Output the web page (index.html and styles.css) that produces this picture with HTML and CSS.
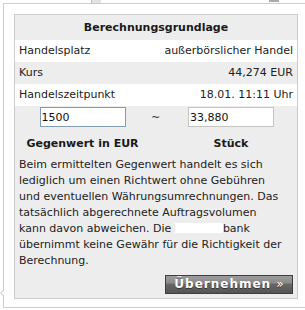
FILE: index.html
```html
<!DOCTYPE html>
<html lang="de">
<head>
    <meta charset="UTF-8">
    <meta name="viewport" content="width=device-width, initial-scale=1.0">
    <title>Berechnungsgrundlage</title>
    <link rel="stylesheet" href="styles.css">
</head>
<body>
    <div class="behind">
        <div class="market-select">
            <span class="market-text">Frankfurt - Zertifikate</span>
            <span class="market-btn"></span>
        </div>
    </div>

    <div class="popup">
        <div class="calc">
            <div class="calc-head">Berechnungsgrundlage</div>
            <div class="calc-row">
                <span>Handelsplatz</span>
                <span>außerbörslicher Handel</span>
            </div>
            <div class="calc-row alt">
                <span>Kurs</span>
                <span>44,274 EUR</span>
            </div>
            <div class="calc-row">
                <span>Handelszeitpunkt</span>
                <span>18.01. 11:11 Uhr</span>
            </div>

            <div class="calc-body">
                <div class="calc-grid">
                    <input class="calc-input focused" type="text" value="1500">
                    <span class="calc-tilde">~</span>
                    <input class="calc-input" type="text" value="33,880">
                    <span class="calc-label">Gegenwert in EUR</span>
                    <span></span>
                    <span class="calc-label">Stück</span>
                </div>

                <p class="calc-note">
                    Beim ermittelten Gegenwert handelt es sich<br>
                    lediglich um einen Richtwert ohne Gebühren<br>
                    und eventuellen Währungsumrechnungen. Das<br>
                    tatsächlich abgerechnete Auftragsvolumen<br>
                    kann davon abweichen. Die <span class="redacted"></span>bank<br>
                    übernimmt keine Gewähr für die Richtigkeit der<br>
                    Berechnung.
                </p>

                <div class="calc-actions">
                    <button class="btn-apply" type="button">Übernehmen <span class="btn-arrow">»</span></button>
                </div>
            </div>
        </div>
    </div>
</body>
</html>
```

FILE: styles.css
```css
* {
    box-sizing: border-box;
    margin: 0;
    padding: 0;
}

body {
    font-family: Verdana, "DejaVu Sans", sans-serif;
    font-size: 11px;
    color: #222;
    background-color: #fff;
    width: 305px;
    height: 310px;
    overflow: hidden;
    position: relative;
}

/* page content peeking out above the popup */
.behind {
    height: 3px;
    overflow: hidden;
}

.market-select {
    display: flex;
    align-items: flex-end;
    width: 198px;
    height: 18px;
    margin: -15px 0 0 91px;
    border-left: 1px solid #bbb;
    background: linear-gradient(to right, #e2e2e2 9px, #fff 9px);
}

.market-text {
    margin-left: 11px;
    line-height: 14px;
    margin-bottom: 1px;
    color: #222;
    flex: 1;
}

.market-btn {
    width: 10px;
    height: 16px;
    margin-right: 10px;
    margin-bottom: 1px;
    background-color: #aaa;
}

/* popup */
.popup {
    position: absolute;
    left: 3px;
    top: 3px;
    width: 310px;
    height: 305px;
    padding: 10px 10px 8px 10px;
    border: 1px solid #ccc;
    background-color: #fff;
}

.popup::before,
.popup::after {
    content: '';
    position: absolute;
    width: 0;
    height: 0;
    border-style: solid;
    border-color: transparent;
}

.popup::before {
    left: -4px;
    top: 285px;
    border-width: 4px 4px 4px 0;
    border-right-color: #ccc;
}

.popup::after {
    left: -3px;
    top: 286px;
    border-width: 3px 4px 3px 0;
    border-right-color: #fff;
}

.calc {
    width: 284px;
    height: 285px;
    border: 1px solid #ccc;
    display: flex;
    flex-direction: column;
}

.calc-head {
    height: 25px;
    line-height: 26px;
    text-align: center;
    font-weight: bold;
    background-color: #ededed;
    color: #1a1a1a;
}

.calc-row {
    display: flex;
    justify-content: space-between;
    height: 22px;
    line-height: 22px;
    padding: 0 4px;
    color: #222;
    background-color: #fff;
}

.calc-row.alt {
    background-color: #ededed;
}

.calc-body {
    flex: 1;
    display: flex;
    flex-direction: column;
    background-color: #ededed;
    padding: 1px 4px 4px 4px;
}

.calc-grid {
    display: grid;
    grid-template-columns: 127px 19px 1fr;
    grid-template-rows: 20px 14px;
    row-gap: 10px;
    justify-items: center;
    align-items: center;
    margin: 0 -4px 0 0;
}

.calc-input {
    width: 86px;
    height: 20px;
    padding: 0 1px;
    border: 1px solid #c4c4c4;
    background-color: #fff;
    font-family: Verdana, "DejaVu Sans", sans-serif;
    font-size: 11px;
    color: #111;
    outline: none;
}

.calc-input.focused {
    border-color: #7f9db9;
}

.calc-tilde {
    font-size: 11px;
    color: #333;
}

.calc-label {
    font-weight: bold;
    line-height: 14px;
    color: #1a1a1a;
}

.calc-note {
    margin-top: 6px;
    line-height: 16px;
    color: #222;
    white-space: nowrap;
}

.redacted {
    display: inline-block;
    width: 48px;
    height: 10px;
    background-color: #fff;
    vertical-align: -1px;
}

.calc-actions {
    margin-top: auto;
    display: flex;
    justify-content: flex-end;
}

.btn-apply {
    width: 128px;
    height: 19px;
    border: 1px solid #3f3f3f;
    background: linear-gradient(#9c9c9c 0, #8a8a8a 40%, #666 50%, #555 100%);
    color: #fff;
    font-family: Verdana, "DejaVu Sans", sans-serif;
    font-size: 12px;
    font-weight: bold;
    letter-spacing: 1px;
    line-height: 17px;
    text-shadow: 0 1px 0 #333;
    cursor: pointer;
}

.btn-arrow {
    font-weight: normal;
    letter-spacing: 0;
}
```
